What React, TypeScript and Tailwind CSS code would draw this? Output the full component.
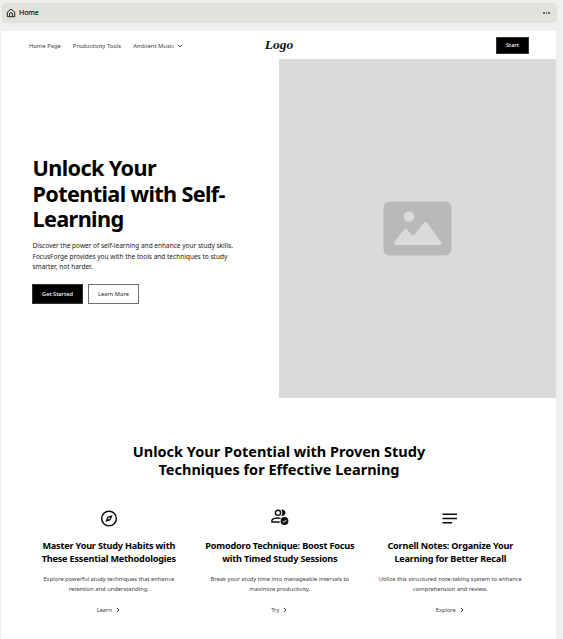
import React from "react";

const features = [
  {
    icon: "compass",
    title: ["Master Your Study Habits with", "These Essential Methodologies"],
    text: ["Explore powerful study techniques that enhance", "retention and understanding."],
    action: "Learn",
  },
  {
    icon: "people",
    title: ["Pomodoro Technique: Boost Focus", "with Timed Study Sessions"],
    text: ["Break your study time into manageable intervals to", "maximize productivity."],
    action: "Try",
  },
  {
    icon: "notes",
    title: ["Cornell Notes: Organize Your", "Learning for Better Recall"],
    text: ["Utilize this structured note-taking system to enhance", "comprehension and review."],
    action: "Explore",
  },
];

function FeatureIcon({ name }: { name: string }) {
  if (name === "compass") {
    return (
      <svg className="h-5 w-5" viewBox="0 0 20 20" fill="none">
        <circle cx="10" cy="10.5" r="7.3" stroke="#0c0c0c" strokeWidth="1.5" />
        <path fillRule="evenodd" d="M13.6 6.9 11.6 12.2 6.4 14.1 8.4 8.8ZM10 9.6a.9.9 0 1 0 0 1.8.9.9 0 0 0 0-1.8Z" fill="#0c0c0c" />
      </svg>
    );
  }
  if (name === "people") {
    return (
      <svg className="h-5 w-5" viewBox="0 0 20 20" fill="none">
        <circle cx="8" cy="4.8" r="2.6" stroke="#0c0c0c" strokeWidth="1.4" />
        <path d="M11.2 1.4c3-.2 4.2 1.7 4.2 3.4s-1.4 3.4-4.2 3.3c1.5-2 1.5-4.7 0-6.7Z" fill="#0c0c0c" />
        <path d="M9.7 14H1.9v-1.4c0-2.3 4.7-3 8.6-2.2" stroke="#0c0c0c" strokeWidth="1.4" />
        <circle cx="14.5" cy="13" r="3.9" fill="#0c0c0c" />
        <path d="m12.6 13 1.4 1.4 2.5-2.6" stroke="#fff" strokeWidth="1" />
      </svg>
    );
  }
  return (
    <svg className="h-5 w-5" viewBox="0 0 20 20" fill="none" stroke="#0c0c0c" strokeWidth="1.4">
      <path d="M2.5 6.2H17M2.500 10.500H17M2.500 14.700H12" />
    </svg>
  );
}

function Chevron({ className }: { className: string }) {
  return (
    <svg className={className} viewBox="0 0 6 6" fill="none" stroke="#333" strokeWidth=".95">
      <path d="m1.8.9 2.100 2.100-2.100 2.100" />
    </svg>
  );
}

export default function App() {
  return (
    <div className="h-[639px] w-[563px] overflow-hidden bg-[#f0efed] pl-px pt-[3px] font-['Noto_Sans','Open_Sans',sans-serif] text-black">
      <div className="ml-px flex h-5 w-[555px] items-center rounded-[4px] bg-[#e2e1dd] pl-[4px] pr-[7px]">
        <svg className="h-2.5 w-2.5" viewBox="0 0 10 10" fill="none" stroke="#222">
          <path d="M1.3 4.2 5 1.2l3.7 3v4.5H1.3Z" />
          <path d="M3.5 8.5V6.2a1.5 1.5 0 0 1 3 0v2.300" />
        </svg>
        <span className="ml-[3px] pt-px text-[7px] font-medium tracking-[-0.1px]">Home</span>
        <div className="ml-auto flex gap-[1px]">
          <i className="h-[2px] w-[2px] bg-[#666]" />
          <i className="h-[2px] w-[1px] bg-[#666]" />
          <i className="h-[2px] w-[2px] bg-[#666]" />
        </div>
      </div>

      <div className="mt-2 h-[608px] w-[555px] bg-white">
        <header className="grid h-7 grid-cols-3 items-center pl-7 pr-[27px] text-[5.850px] text-[#404040]">
          <nav className="flex items-center gap-3 whitespace-nowrap pt-[3px]">
            <span>Home Page</span>
            <span>Productivity Tools</span>
            <span className="flex items-center gap-[3px]">
              Ambient Music
              <Chevron className="h-1.5 w-1.5 rotate-90" />
            </span>
          </nav>
          <span className="justify-self-center text-center font-['Liberation_Serif',serif] text-[13.500px] font-bold italic leading-none text-[#111]">Logo</span>
          <button className="h-[17px] w-[33px] justify-self-end border border-[#333] bg-black pt-[2px] text-[5.600px] font-medium leading-none text-white">Start</button>
        </header>

        <section className="flex h-[339px]">
          <div className="w-[278px] pl-[31px] pt-[96px]">
            <h1 className="whitespace-nowrap pl-[0.500px] text-[21.700px] font-bold leading-[25.500px] tracking-[-0.650px]">
              Unlock Your<br />Potential with Self-<br />Learning
            </h1>
            <p className="mt-[9.500px] whitespace-nowrap pl-[0.500px] text-[6.530px] leading-[10.600px] text-[#202020]">
              Discover the power of self-learning and enhance your study skills.<br />
              FocusForge provides you with the tools and techniques to study<br />
              smarter, not harder.
            </p>
            <div className="mt-[11.500px] flex gap-[5px] text-[5.700px]">
              <button className="h-5 w-[51px] border border-[#333] bg-black font-medium text-white">Get Started</button>
              <button className="h-5 w-[51px] border border-[#707070] text-[#222]">Learn More</button>
            </div>
          </div>
          <div className="flex w-[277px] items-center justify-center bg-[#dadada]">
            <svg className="h-[55px] w-[69px]" viewBox="0 0 69 55">
              <rect x=".5" y=".5" width="68" height="54" rx="6" fill="#b9b9b9" />
              <circle cx="26" cy="15.500" r="5.300" fill="#dadada" />
              <path d="M11 41.500 21 28.500q1.500-1.700 3 0l4.500 5q1.500 1.500 3 0L41 21.500q1.500-1.500 3 0L58.500 41.500q1 2.500-2 2.500h-43q-3 0-2.500-2.500Z" fill="#dadada" />
            </svg>
          </div>
        </section>

        <section className="pt-[44px]">
          <h2 className="whitespace-nowrap pl-px text-center text-[14.500px] font-bold leading-[18px]">
            Unlock Your Potential with Proven Study<br />Techniques for Effective Learning
          </h2>
          <div className="mt-[30px] grid grid-cols-[171px_171px_170px] pl-[22.300px]">
            {features.map((feature) => (
              <article key={feature.icon} className="flex flex-col items-center whitespace-nowrap text-center">
                <FeatureIcon name={feature.icon} />
                <h3 className="mt-[11px] text-[9.100px] font-bold leading-[13px] tracking-[-0.180px]">
                  {feature.title[0]}<br />{feature.title[1]}
                </h3>
                <p className="mt-[9px] text-[5.780px] leading-[10px] text-[#404040]">
                  {feature.text[0]}<br />{feature.text[1]}
                </p>
                <span className="mt-[11px] flex items-center gap-[3px] text-[5.700px] leading-[10px] text-[#404040]">
                  {feature.action}
                  <Chevron className="h-1.5 w-1.5" />
                </span>
              </article>
            ))}
          </div>
        </section>
      </div>
    </div>
  );
}
